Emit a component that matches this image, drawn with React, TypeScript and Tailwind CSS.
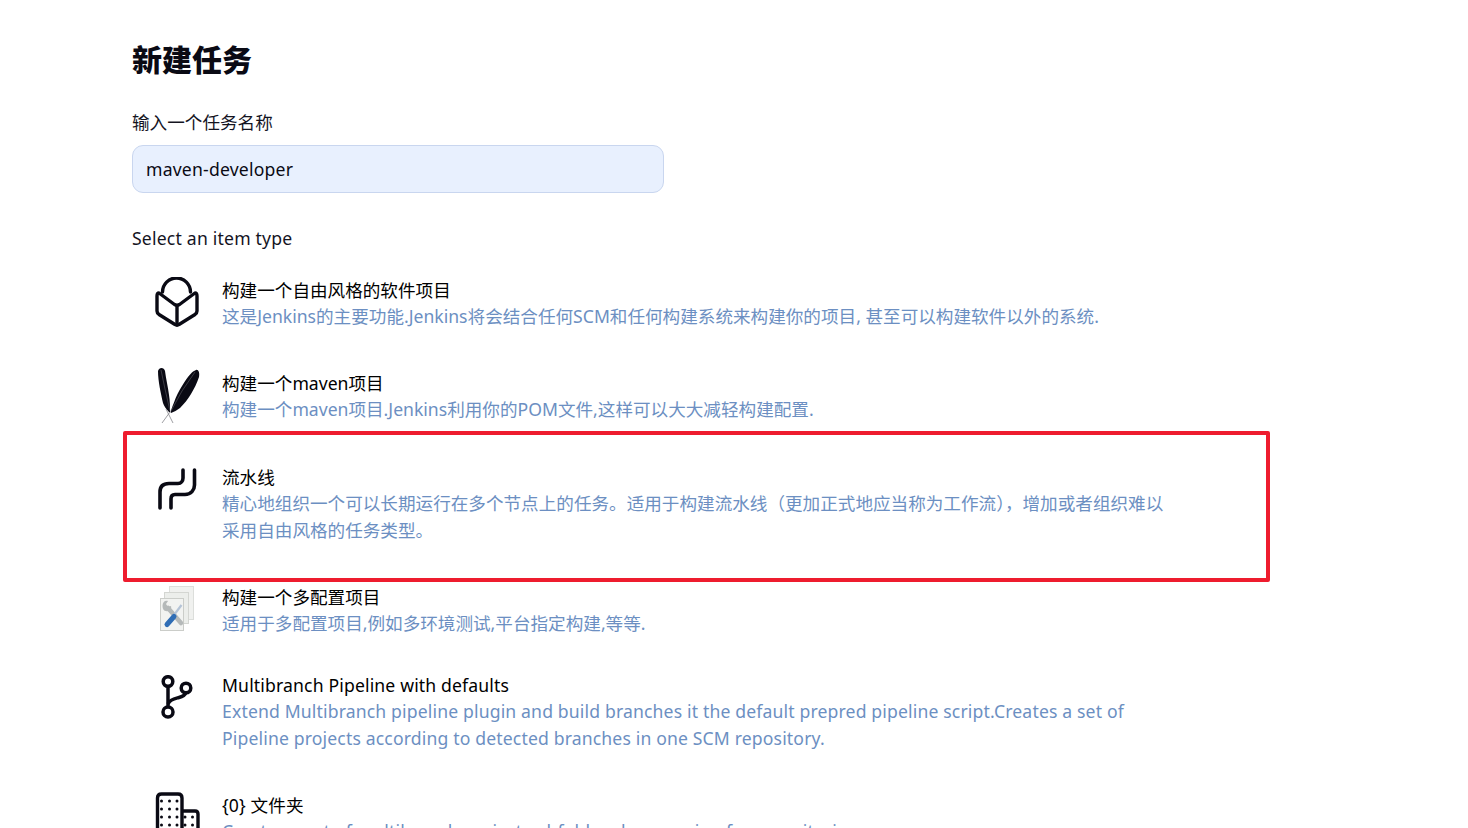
const FONT = "font-['Noto_Sans','Noto_Sans_CJK_SC',sans-serif]";

function Box() {
  return (
    <svg width="44" height="50" viewBox="0 0 44 50" fill="none" stroke="#0a0a14" strokeWidth="3.400" strokeLinejoin="round" strokeLinecap="round">
      <path d="M7.500 15A14 14 0 1 1 35.500 15" />
      <path d="M4 16 19.500 27.500Q22 29 24.500 27.500L40 16Q42 16 42 19V34Q42 36 40 37.500L24 47.500Q22 48.500 20 47.500L4 37.500Q2 36 2 34V19Q2 16 4 16Z" />
      <path d="M22 29V48" />
    </svg>
  );
}

function Feathers() {
  return (
    <svg width="46" height="58" viewBox="0 0 46 58">
      <path d="M4 4C5 0 10 0 11 4 12 12 14 20 15 28 16 34 16 40 16 45L15 45C12 42 10 39 9 36 7 27 4 14 4 4Z" fill="#0a0a14" />
      <path d="M42 3C44 2 46 5 45 10 43 16 40 22 37 27 34 32 30 37 26 41 23 43 20 45 17 46L16.500 45C17.500 42 18.500 39 20 35.500 22 29 25 24 28 19 31 14 33.500 10 37 6.500 38 5 40 4 42 3Z" fill="#0a0a14" />
      <path d="M7 3 11 22 16 44M41 5 28 24 17 44" stroke="#6d6d75" strokeWidth="0.500" fill="none" />
      <path d="M16 45 8 56M12 42 19 56" stroke="#85858c" strokeWidth="0.800" fill="none" />
    </svg>
  );
}

function Pipe() {
  return (
    <svg width="40" height="42" viewBox="0 0 40 42" fill="none" stroke="#0a0a14" strokeWidth="3.600" strokeLinecap="round">
      <path d="M3 40V24C3 18 6 15.500 12 15.500H21C24 15.500 26 13 26 10V2" />
      <path d="M14 40V31C14 28 15.500 26.500 18 26.500H28C34 26.500 37.500 22 37.500 17V2" />
    </svg>
  );
}

function Tools() {
  return (
    <svg width="36" height="46" viewBox="0 0 36 46">
      <rect x="10.500" y="0.500" width="24" height="33" fill="#f0f1ef" stroke="#dcdedb" />
      <rect x="5.500" y="6.500" width="24" height="31" fill="#eceeeb" stroke="#d4d6d2" />
      <rect x="1.500" y="12.500" width="23" height="32" fill="#f2f3f1" stroke="#cbcdc9" />
      <path d="M9 22L22 37" stroke="#b5b9b9" strokeWidth="4.500" strokeLinecap="round" />
      <path d="M3.500 20C3.500 16 6 14 9 15L7 18 9 21 12 20C13 23 10 26 7 25 5 25 3.500 23 3.500 20Z" fill="#b5b9b9" />
      <path d="M22.500 19 15 29" stroke="#b4c3d6" strokeWidth="2.200" />
      <path d="M15 30.500 8 38.500" stroke="#2f6db5" strokeWidth="5" strokeLinecap="round" />
    </svg>
  );
}

function Branch() {
  return (
    <svg width="32" height="44" viewBox="0 0 32 44" fill="none" stroke="#0a0a14" strokeWidth="3.500">
      <circle cx="7" cy="6.500" r="4.800" />
      <circle cx="7" cy="37" r="5" />
      <circle cx="25" cy="13" r="4.800" />
      <path d="M7 11V32" />
      <path d="M7 29C9 24 14 23.500 18 22.500C22 21.500 24 20 25 17.500" />
    </svg>
  );
}

function Building() {
  const dots: [number, number][] = [];
  for (const y of [9, 17, 25, 33]) for (const x of [7.500, 15.500, 23]) dots.push([x, y]);
  for (const y of [25, 33]) for (const x of [31, 38.500]) dots.push([x, y]);
  return (
    <svg width="46" height="40" viewBox="0 0 46 40" fill="none" stroke="#0a0a14" strokeWidth="3.400" strokeLinejoin="round">
      <path d="M3.500 42V6C3.500 3.500 5 2 7.500 2H24C26.500 2 28 3.500 28 6V42" />
      <path d="M28 19H41C43 19 44 20 44 22V42" />
      {dots.map(([x, y]) => (
        <circle key={`${x}-${y}`} cx={x} cy={y} r="1.500" fill="#0a0a14" stroke="none" />
      ))}
    </svg>
  );
}

type ItemProps = {
  icon: React.ReactNode;
  title: string;
  desc: string;
  cls: string;
  iconCls: string;
  latin?: boolean;
};

function Item({ icon, title, desc, cls, iconCls, latin }: ItemProps) {
  return (
    <div className={`flex ${cls}`}>
      <div className={`w-[90px] flex justify-center items-start shrink-0 ${iconCls}`}>{icon}</div>
      <div className={`w-[950px] ${latin ? "tracking-[0.15px]" : ""}`}>
        <div className="text-[#000] leading-[26.400px]">{title}</div>
        <div className="text-[#6c8fc2] leading-[26.400px]">{desc}</div>
      </div>
    </div>
  );
}

export default function App() {
  return (
    <div className={`relative h-[828px] overflow-hidden bg-white pl-[132px] text-[17.600px] text-[#14141f] ${FONT}`}>
      <h1 className="pt-[38px] text-[30px] leading-[44px] font-extrabold text-[#0a0a14]">新建任务</h1>
      <div className="mt-[27px] leading-[26px]">输入一个任务名称</div>
      <div className="mt-[10px] flex h-[48px] w-[532px] items-center rounded-[11px] border border-[#c9d6ef] bg-[#e8f0fe] px-[13px] tracking-[0.2px] text-[#0a0a14]">
        maven-developer
      </div>
      <div className="mt-[32px] leading-[26px] tracking-[0.2px]">Select an item type</div>
      <div className="mt-[26px]">
        <Item cls="h-[93px]" iconCls="" icon={<Box />} title="构建一个自由风格的软件项目" desc="这是Jenkins的主要功能.Jenkins将会结合任何SCM和任何构建系统来构建你的项目, 甚至可以构建软件以外的系统." />
        <Item cls="h-[94px]" iconCls="-mt-[3px]" icon={<Feathers />} title="构建一个maven项目" desc="构建一个maven项目.Jenkins利用你的POM文件,这样可以大大减轻构建配置." />
        <Item cls="h-[120px]" iconCls="pt-[4px]" icon={<Pipe />} title="流水线" desc="精心地组织一个可以长期运行在多个节点上的任务。适用于构建流水线（更加正式地应当称为工作流），增加或者组织难以采用自由风格的任务类型。" />
        <Item cls="h-[88px]" iconCls="pt-[2px]" icon={<Tools />} title="构建一个多配置项目" desc="适用于多配置项目,例如多环境测试,平台指定构建,等等." />
        <Item latin cls="h-[120px]" iconCls="pt-[3px]" icon={<Branch />} title="Multibranch Pipeline with defaults" desc="Extend Multibranch pipeline plugin and build branches it the default prepred pipeline script.Creates a set of Pipeline projects according to detected branches in one SCM repository." />
        <Item latin cls="h-[60px]" iconCls="" icon={<Building />} title="{0} 文件夹" desc="Creates a set of multibranch project subfolders by scanning for repositories." />
      </div>
      <div className="pointer-events-none absolute left-[123px] top-[431px] h-[151px] w-[1147px] rounded-[2px] border-[4px] border-[#ee1c2e]" />
    </div>
  );
}
